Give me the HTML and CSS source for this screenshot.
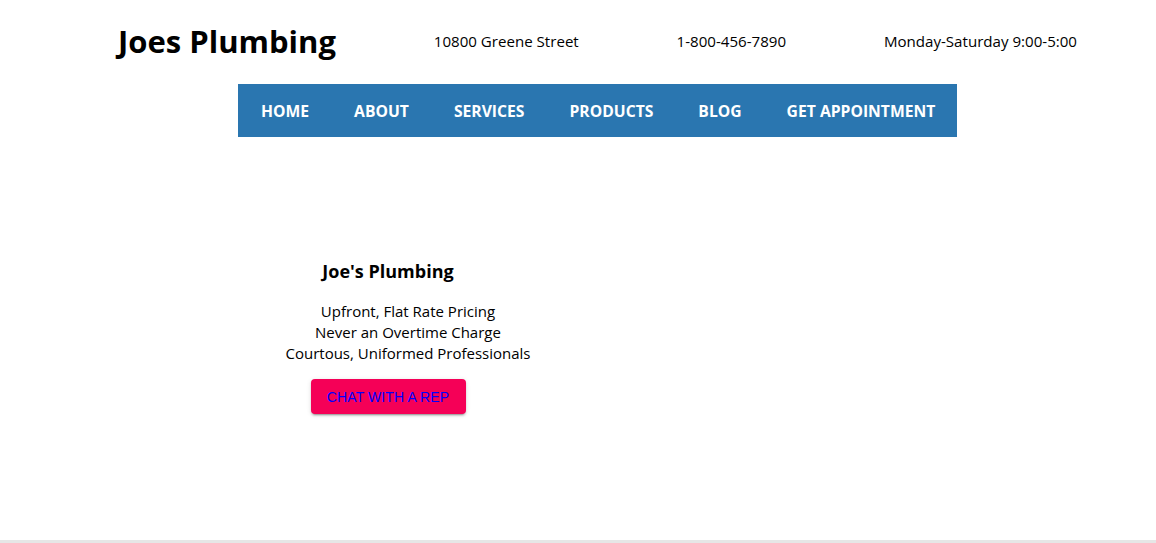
FILE: index.html
```html
<!DOCTYPE html>
<html lang="en">
<head>
<meta charset="utf-8">
<title>Joes Plumbing</title>
<link rel="stylesheet" href="styles.css">
</head>
<body>
<div class="page">
  <header class="topbar">
    <h1 class="brand">Joes Plumbing</h1>
    <span class="info">10800 Greene Street</span>
    <span class="info">1-800-456-7890</span>
    <span class="info">Monday-Saturday 9:00-5:00</span>
  </header>
  <nav class="nav">
    <a class="nav-item" href="#">HOME</a>
    <a class="nav-item" href="#">ABOUT</a>
    <a class="nav-item" href="#">SERVICES</a>
    <a class="nav-item" href="#">PRODUCTS</a>
    <a class="nav-item" href="#">BLOG</a>
    <a class="nav-item" href="#">GET APPOINTMENT</a>
  </nav>
  <main class="hero">
    <h2 class="hero-title">Joe's Plumbing</h2>
    <ul class="perks">
      <li>Upfront, Flat Rate Pricing</li>
      <li>Never an Overtime Charge</li>
      <li>Courtous, Uniformed Professionals</li>
    </ul>
    <button class="chat-btn" type="button">CHAT WITH A REP</button>
  </main>
</div>
<div class="bottom-bar"></div>
</body>
</html>
```
FILE: styles.css
```css
html, body {
  margin: 0;
  padding: 0;
  background: #ffffff;
}
body {
  font-family: "Open Sans", "Noto Sans", sans-serif;
  color: #000;
  width: 1156px;
  height: 543px;
  overflow: hidden;
  display: flex;
  flex-direction: column;
}
.page {
  flex: 1;
}
.topbar {
  display: flex;
  align-items: center;
  justify-content: space-between;
  padding: 0 79px 0 118px;
  height: 84px;
}
.brand {
  margin: 0;
  font-size: 31px;
  font-weight: 700;
  line-height: 1;
  position: relative;
  top: -1px;
}
.info {
  font-size: 15.1px;
  position: relative;
  top: -1px;
}
.nav {
  display: flex;
  width: fit-content;
  margin-left: 238px;
  background: #2a76b0;
  height: 53px;
  align-items: center;
  padding: 0 22px 0 23px;
  gap: 45px;
}
.nav-item {
  color: #ffffff;
  text-decoration: none;
  font-weight: 700;
  font-size: 15.7px;
}
.hero {
  width: 776px;
  text-align: center;
  padding-top: 121px;
}
.hero-title {
  margin: 0;
  font-size: 18px;
  font-weight: 700;
  line-height: 24px;
  position: relative;
  top: 1px;
}
.perks {
  list-style: none;
  margin: 19px 0 0;
  padding-left: 40px;
  font-size: 15px;
  line-height: 21px;
}
.chat-btn {
  margin-top: 15px;
  width: 155px;
  height: 35px;
  border: none;
  border-radius: 4px;
  background: #f50057;
  color: #0000ff;
  font-family: "Liberation Sans", Arial, sans-serif;
  font-size: 14px;
  letter-spacing: 0.1px;
  padding: 0;
  box-shadow: 0 3px 1px -2px rgba(0,0,0,0.2), 0 2px 2px 0 rgba(0,0,0,0.14), 0 1px 5px 0 rgba(0,0,0,0.12);
}
.bottom-bar {
  height: 3px;
  background: #e6e6e6;
  flex: none;
}
```
